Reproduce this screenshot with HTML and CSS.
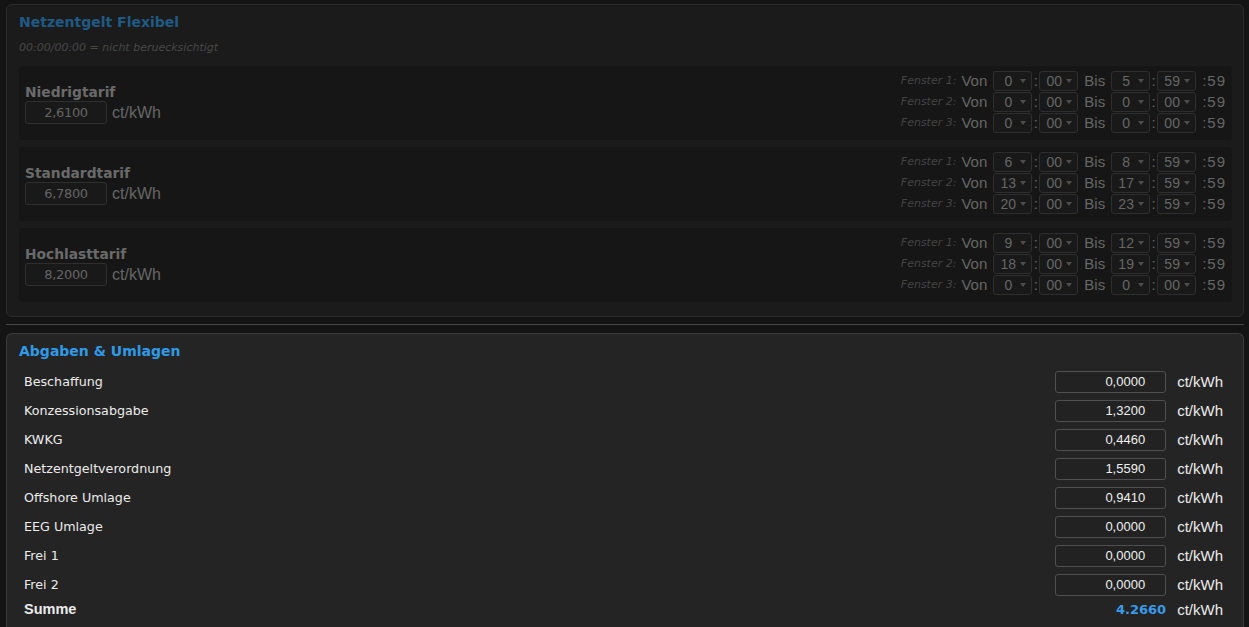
FILE: index.html
```html
<!DOCTYPE html>
<html lang="de">
<head>
<meta charset="utf-8">
<title>Netzentgelt</title>
<link rel="stylesheet" href="styles.css">
</head>
<body>
<section class="panel panel-flex">
  <h2 class="title title-dim">Netzentgelt Flexibel</h2>
  <p class="hint">00:00/00:00 = nicht beruecksichtigt</p>

  <div class="tarif">
    <div class="tarif-left">
      <div class="tarif-name">Niedrigtarif</div>
      <div class="tarif-price"><span class="box-dim">2,6100</span><span class="unit-dim">ct/kWh</span></div>
    </div>
    <div class="windows">
      <div class="win"><span class="win-label">Fenster 1:</span><span class="kw">Von</span><span class="sel">0</span><span class="colon">:</span><span class="sel">00</span><span class="kw">Bis</span><span class="sel">5</span><span class="colon">:</span><span class="sel">59</span><span class="sec">:59</span></div>
      <div class="win"><span class="win-label">Fenster 2:</span><span class="kw">Von</span><span class="sel">0</span><span class="colon">:</span><span class="sel">00</span><span class="kw">Bis</span><span class="sel">0</span><span class="colon">:</span><span class="sel">00</span><span class="sec">:59</span></div>
      <div class="win"><span class="win-label">Fenster 3:</span><span class="kw">Von</span><span class="sel">0</span><span class="colon">:</span><span class="sel">00</span><span class="kw">Bis</span><span class="sel">0</span><span class="colon">:</span><span class="sel">00</span><span class="sec">:59</span></div>
    </div>
  </div>

  <div class="tarif">
    <div class="tarif-left">
      <div class="tarif-name">Standardtarif</div>
      <div class="tarif-price"><span class="box-dim">6,7800</span><span class="unit-dim">ct/kWh</span></div>
    </div>
    <div class="windows">
      <div class="win"><span class="win-label">Fenster 1:</span><span class="kw">Von</span><span class="sel">6</span><span class="colon">:</span><span class="sel">00</span><span class="kw">Bis</span><span class="sel">8</span><span class="colon">:</span><span class="sel">59</span><span class="sec">:59</span></div>
      <div class="win"><span class="win-label">Fenster 2:</span><span class="kw">Von</span><span class="sel">13</span><span class="colon">:</span><span class="sel">00</span><span class="kw">Bis</span><span class="sel">17</span><span class="colon">:</span><span class="sel">59</span><span class="sec">:59</span></div>
      <div class="win"><span class="win-label">Fenster 3:</span><span class="kw">Von</span><span class="sel">20</span><span class="colon">:</span><span class="sel">00</span><span class="kw">Bis</span><span class="sel">23</span><span class="colon">:</span><span class="sel">59</span><span class="sec">:59</span></div>
    </div>
  </div>

  <div class="tarif">
    <div class="tarif-left">
      <div class="tarif-name">Hochlasttarif</div>
      <div class="tarif-price"><span class="box-dim">8,2000</span><span class="unit-dim">ct/kWh</span></div>
    </div>
    <div class="windows">
      <div class="win"><span class="win-label">Fenster 1:</span><span class="kw">Von</span><span class="sel">9</span><span class="colon">:</span><span class="sel">00</span><span class="kw">Bis</span><span class="sel">12</span><span class="colon">:</span><span class="sel">59</span><span class="sec">:59</span></div>
      <div class="win"><span class="win-label">Fenster 2:</span><span class="kw">Von</span><span class="sel">18</span><span class="colon">:</span><span class="sel">00</span><span class="kw">Bis</span><span class="sel">19</span><span class="colon">:</span><span class="sel">59</span><span class="sec">:59</span></div>
      <div class="win"><span class="win-label">Fenster 3:</span><span class="kw">Von</span><span class="sel">0</span><span class="colon">:</span><span class="sel">00</span><span class="kw">Bis</span><span class="sel">0</span><span class="colon">:</span><span class="sel">00</span><span class="sec">:59</span></div>
    </div>
  </div>
</section>

<hr class="sep">

<section class="panel panel-abg">
  <h2 class="title title-blue">Abgaben &amp; Umlagen</h2>
  <div class="rows">
    <div class="row"><span class="lbl">Beschaffung</span><span class="box">0,0000</span><span class="unit">ct/kWh</span></div>
    <div class="row"><span class="lbl">Konzessionsabgabe</span><span class="box">1,3200</span><span class="unit">ct/kWh</span></div>
    <div class="row"><span class="lbl">KWKG</span><span class="box">0,4460</span><span class="unit">ct/kWh</span></div>
    <div class="row"><span class="lbl">Netzentgeltverordnung</span><span class="box">1,5590</span><span class="unit">ct/kWh</span></div>
    <div class="row"><span class="lbl">Offshore Umlage</span><span class="box">0,9410</span><span class="unit">ct/kWh</span></div>
    <div class="row"><span class="lbl">EEG Umlage</span><span class="box">0,0000</span><span class="unit">ct/kWh</span></div>
    <div class="row"><span class="lbl">Frei 1</span><span class="box">0,0000</span><span class="unit">ct/kWh</span></div>
    <div class="row"><span class="lbl">Frei 2</span><span class="box">0,0000</span><span class="unit">ct/kWh</span></div>
    <div class="row row-sum"><span class="lbl lbl-sum">Summe</span><span class="sum">4.2660</span><span class="unit">ct/kWh</span></div>
  </div>
</section>
</body>
</html>
```

FILE: styles.css
```css
html, body {
  margin: 0;
  background: #141414;
}
body {
  padding: 4px 5px 0 6px;
  font-family: "Liberation Sans", Arial, sans-serif;
  overflow: hidden;
}
.panel {
  border-radius: 6px;
  box-sizing: border-box;
}
.panel-flex {
  background: #1b1b1b;
  border: 1px solid #2b2b2b;
  padding: 8px 11px 14px 12px;
}
.title {
  margin: 0;
  font-family: "DejaVu Sans", Verdana, sans-serif;
  font-weight: bold;
  font-size: 14px;
  line-height: 18px;
}
.title-dim { color: #1f5a84; }
.title-blue { color: #2f9ae6; }
.hint {
  margin: 10px 0 12px 0;
  font-family: "DejaVu Sans", Verdana, sans-serif;
  font-style: italic;
  font-size: 11px;
  line-height: 13px;
  color: #474747;
}
.tarif {
  display: flex;
  justify-content: space-between;
  align-items: center;
  background: #161616;
  border-radius: 4px;
  height: 74px;
  padding: 0 6px;
  margin-bottom: 7px;
}
.tarif:last-child { margin-bottom: 0; }
.tarif-left { margin-top: 2px; }
.tarif-name {
  font-family: "DejaVu Sans", Verdana, sans-serif;
  font-weight: bold;
  font-size: 13.8px;
  line-height: 16px;
  color: #6a6a6a;
}
.tarif-price {
  display: flex;
  align-items: center;
  margin-top: 1px;
}
.box-dim {
  box-sizing: border-box;
  width: 82px;
  height: 23px;
  border: 1px solid #2f2f2f;
  border-radius: 3px;
  background: #191919;
  color: #646464;
  font-size: 13px;
  line-height: 21px;
  text-align: center;
  font-family: "DejaVu Sans", Verdana, sans-serif;
  letter-spacing: -0.3px;
}
.unit-dim {
  margin-left: 5px;
  font-size: 16px;
  color: #666;
}
.windows {
  display: flex;
  flex-direction: column;
  align-items: flex-end;
  margin-top: -3px;
}
.win {
  display: flex;
  align-items: center;
  height: 21px;
}
.win-label {
  font-family: "DejaVu Sans", Verdana, sans-serif;
  font-style: italic;
  font-size: 11px;
  color: #444;
  margin-right: 5px;
}
.kw {
  font-size: 15px;
  color: #666;
  margin-right: 6px;
}
.sel + .kw { margin-left: 6px; }
.sel {
  position: relative;
  box-sizing: border-box;
  width: 39px;
  height: 20px;
  border: 1px solid #2e2e2e;
  border-radius: 3px;
  background: #191919;
  color: #666;
  font-size: 14px;
  line-height: 18px;
  padding-left: 5px;
  padding-right: 14px;
  text-align: center;
}
.sel::after {
  content: "";
  position: absolute;
  right: 5px;
  top: 7px;
  border-left: 3.5px solid transparent;
  border-right: 3.5px solid transparent;
  border-top: 4px solid #4d4d4d;
}
.colon {
  width: 7px;
  text-align: center;
  font-size: 15px;
  color: #666;
}
.sec {
  margin-left: 6px;
  font-size: 15px;
  letter-spacing: 1px;
  color: #666;
}
.sep {
  margin: 7px 0 8px 0;
  border: 0;
  height: 1px;
  background: #454545;
}
.panel-abg {
  background: #242424;
  border: 1px solid #3b3b3b;
  border-bottom: 0;
  border-radius: 6px 6px 0 0;
  padding: 8px 20px 20px 12px;
  min-height: 300px;
}
.rows { margin-top: 7px; }
.row {
  display: flex;
  align-items: center;
  height: 29px;
  padding-left: 5px;
}
.lbl {
  flex: 1;
  font-family: "DejaVu Sans", Verdana, sans-serif;
  font-size: 12.7px;
  color: #ececec;
}
.box {
  box-sizing: border-box;
  width: 111px;
  height: 22px;
  border: 1px solid #505050;
  border-radius: 3px;
  background: #222;
  color: #f0f0f0;
  font-size: 13px;
  line-height: 20px;
  text-align: right;
  padding-right: 20px;
}
.unit {
  margin-left: 11px;
  font-size: 15px;
  color: #ececec;
}
.row-sum { height: 20px; }
.lbl-sum {
  font-family: "Liberation Sans", Arial, sans-serif;
  font-weight: bold;
  font-size: 14.5px;
}
.sum {
  width: 111px;
  text-align: right;
  font-family: "DejaVu Sans", Verdana, sans-serif;
  font-weight: bold;
  font-size: 13px;
  color: #3a9be8;
}
```
